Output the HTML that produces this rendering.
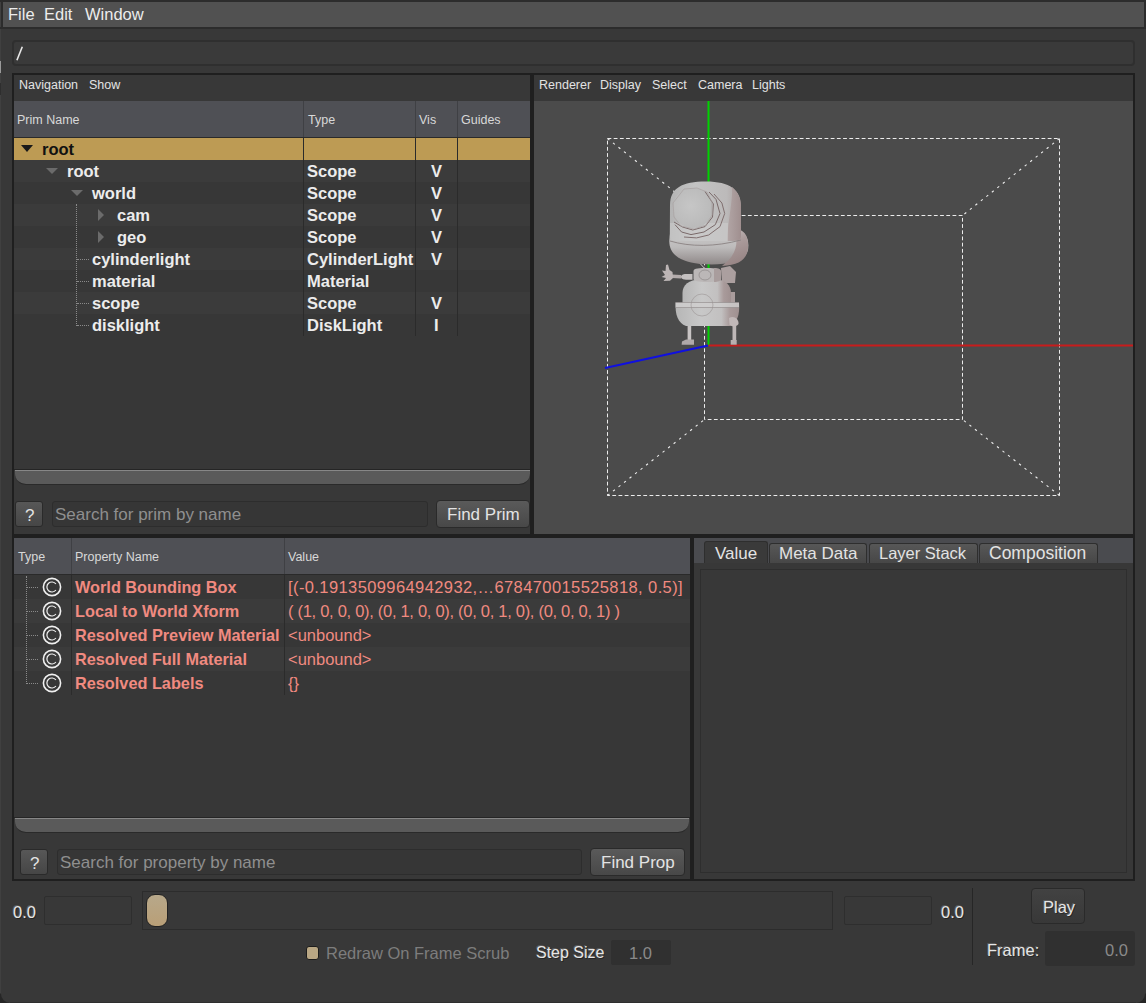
<!DOCTYPE html>
<html><head><meta charset="utf-8">
<style>
*{margin:0;padding:0;box-sizing:border-box}
html,body{width:1146px;height:1003px;overflow:hidden;background:#383838;font-family:"Liberation Sans",sans-serif;color:#e3e3e3}
.a{position:absolute}
.t{position:absolute;white-space:nowrap;line-height:1}
</style></head>
<body>
<div class="a" style="left:0px;top:0px;width:1146px;height:1003px;background:#383838"></div>
<div class="a" style="left:0px;top:0px;width:1px;height:1003px;background:#404040"></div>
<div class="a" style="left:0px;top:0px;width:1146px;height:2px;background:#2c2c2c"></div>
<div class="a" style="left:3px;top:2px;width:1141px;height:25px;background:#515151"></div>
<div class="a" style="left:0px;top:27px;width:1146px;height:2px;background:#2c2c2c"></div>
<div class="a" style="left:1144px;top:0px;width:2px;height:29px;background:#2c2c2c"></div>
<div class="a" style="left:1px;top:2px;width:2px;height:25px;background:#2c2c2c"></div>
<div class="t" style="left:8px;top:6px;font-size:16.5px;color:#ececec">File</div>
<div class="t" style="left:44px;top:6px;font-size:16.5px;color:#ececec">Edit</div>
<div class="t" style="left:85px;top:6px;font-size:16.5px;color:#ececec">Window</div>
<div class="a" style="left:12px;top:40px;width:1123px;height:26px;background:#3a3a3a;border:2px solid #2f2f2f;border-radius:4px"></div>
<svg class="a" style="left:0;top:0" width="40" height="80"><path d="M16.9 60.2L22.3 46.8" stroke="#e8e8e8" stroke-width="1.6"/></svg>
<div class="a" style="left:12px;top:73px;width:520px;height:463px;background:#383838;border:2px solid #1f1f1f"></div>
<div class="t" style="left:19px;top:79px;font-size:12.5px;">Navigation</div>
<div class="t" style="left:89px;top:79px;font-size:12.5px;">Show</div>
<div class="a" style="left:14px;top:101px;width:516px;height:368px;background:#373737"></div>
<div class="a" style="left:14px;top:101px;width:516px;height:36px;background:#4f5055"></div>
<div class="a" style="left:14px;top:137px;width:516px;height:1px;background:#2a2a2a"></div>
<div class="a" style="left:303px;top:101px;width:1px;height:36px;background:#3f4044"></div>
<div class="a" style="left:415px;top:101px;width:1px;height:36px;background:#3f4044"></div>
<div class="a" style="left:457px;top:101px;width:1px;height:36px;background:#3f4044"></div>
<div class="t" style="left:17px;top:114px;font-size:12.5px;color:#d8d8d8">Prim Name</div>
<div class="t" style="left:308px;top:114px;font-size:12.5px;color:#d8d8d8">Type</div>
<div class="t" style="left:419px;top:114px;font-size:12.5px;color:#d8d8d8">Vis</div>
<div class="t" style="left:461px;top:114px;font-size:12.5px;color:#d8d8d8">Guides</div>
<div class="a" style="left:14px;top:138px;width:516px;height:22px;background:#bd9b54"></div>
<svg class="a" style="left:21px;top:145px" width="12" height="7"><path d="M0 0H12L6 7Z" fill="#1a1a1a"/></svg>
<div class="t" style="left:42px;top:141px;font-size:16.5px;font-weight:bold;color:#111">root</div>
<div class="a" style="left:14px;top:160px;width:516px;height:22px;background:#3b3b3b"></div>
<svg class="a" style="left:46px;top:168px" width="12" height="6"><path d="M0 0H12L6 6Z" fill="#6b6b6b"/></svg>
<div class="t" style="left:67px;top:163px;font-size:16.5px;font-weight:bold;color:#ececec">root</div>
<div class="t" style="left:307px;top:163px;font-size:16.5px;font-weight:bold;color:#ececec">Scope</div>
<div class="t" style="left:431px;top:163px;font-size:16.5px;font-weight:bold;color:#ececec">V</div>
<div class="a" style="left:14px;top:182px;width:516px;height:22px;background:#373737"></div>
<svg class="a" style="left:71px;top:190px" width="12" height="6"><path d="M0 0H12L6 6Z" fill="#6b6b6b"/></svg>
<div class="t" style="left:92px;top:185px;font-size:16.5px;font-weight:bold;color:#ececec">world</div>
<div class="t" style="left:307px;top:185px;font-size:16.5px;font-weight:bold;color:#ececec">Scope</div>
<div class="t" style="left:431px;top:185px;font-size:16.5px;font-weight:bold;color:#ececec">V</div>
<div class="a" style="left:14px;top:204px;width:516px;height:22px;background:#3b3b3b"></div>
<svg class="a" style="left:98px;top:209px" width="6" height="12"><path d="M0 0V12L6 6Z" fill="#6b6b6b"/></svg>
<div class="t" style="left:117px;top:207px;font-size:16.5px;font-weight:bold;color:#ececec">cam</div>
<div class="t" style="left:307px;top:207px;font-size:16.5px;font-weight:bold;color:#ececec">Scope</div>
<div class="t" style="left:431px;top:207px;font-size:16.5px;font-weight:bold;color:#ececec">V</div>
<div class="a" style="left:14px;top:226px;width:516px;height:22px;background:#373737"></div>
<svg class="a" style="left:98px;top:231px" width="6" height="12"><path d="M0 0V12L6 6Z" fill="#6b6b6b"/></svg>
<div class="t" style="left:117px;top:229px;font-size:16.5px;font-weight:bold;color:#ececec">geo</div>
<div class="t" style="left:307px;top:229px;font-size:16.5px;font-weight:bold;color:#ececec">Scope</div>
<div class="t" style="left:431px;top:229px;font-size:16.5px;font-weight:bold;color:#ececec">V</div>
<div class="a" style="left:14px;top:248px;width:516px;height:22px;background:#3b3b3b"></div>
<div class="t" style="left:92px;top:251px;font-size:16.5px;font-weight:bold;color:#ececec">cylinderlight</div>
<div class="t" style="left:307px;top:251px;font-size:16.5px;font-weight:bold;color:#ececec">CylinderLight</div>
<div class="t" style="left:431px;top:251px;font-size:16.5px;font-weight:bold;color:#ececec">V</div>
<div class="a" style="left:14px;top:270px;width:516px;height:22px;background:#373737"></div>
<div class="t" style="left:92px;top:273px;font-size:16.5px;font-weight:bold;color:#ececec">material</div>
<div class="t" style="left:307px;top:273px;font-size:16.5px;font-weight:bold;color:#ececec">Material</div>
<div class="a" style="left:14px;top:292px;width:516px;height:22px;background:#3b3b3b"></div>
<div class="t" style="left:92px;top:295px;font-size:16.5px;font-weight:bold;color:#ececec">scope</div>
<div class="t" style="left:307px;top:295px;font-size:16.5px;font-weight:bold;color:#ececec">Scope</div>
<div class="t" style="left:431px;top:295px;font-size:16.5px;font-weight:bold;color:#ececec">V</div>
<div class="a" style="left:14px;top:314px;width:516px;height:22px;background:#373737"></div>
<div class="t" style="left:92px;top:317px;font-size:16.5px;font-weight:bold;color:#ececec">disklight</div>
<div class="t" style="left:307px;top:317px;font-size:16.5px;font-weight:bold;color:#ececec">DiskLight</div>
<div class="t" style="left:434px;top:317px;font-size:16.5px;font-weight:bold;color:#ececec">I</div>
<div class="a" style="left:303px;top:138px;width:1px;height:198px;background:#2b2b2b"></div>
<div class="a" style="left:415px;top:138px;width:1px;height:198px;background:#2b2b2b"></div>
<div class="a" style="left:457px;top:138px;width:1px;height:198px;background:#2b2b2b"></div>
<div class="a" style="left:76px;top:204px;width:1px;height:122px;border-left:1px dotted #8a8a8a"></div>
<div class="a" style="left:77px;top:259px;width:12px;height:1px;border-top:1px dotted #8a8a8a"></div>
<div class="a" style="left:77px;top:281px;width:12px;height:1px;border-top:1px dotted #8a8a8a"></div>
<div class="a" style="left:77px;top:303px;width:12px;height:1px;border-top:1px dotted #8a8a8a"></div>
<div class="a" style="left:77px;top:325px;width:12px;height:1px;border-top:1px dotted #8a8a8a"></div>
<div class="a" style="left:14px;top:469px;width:516px;height:1px;background:#252525"></div>
<div class="a" style="left:15px;top:470px;width:515px;height:15px;background:#5a5a5a;border-top:1px solid #878787;border-bottom:1px solid #2a2a2a;border-radius:0 0 11px 11px"></div>
<div class="a" style="left:15px;top:501px;width:28px;height:26px;border-radius:3px;background:linear-gradient(#575757,#464646);border:1px solid #2a2a2a"></div>
<div class="t" style="left:25px;top:507px;font-size:17px;">?</div>
<div class="a" style="left:52px;top:501px;width:376px;height:26px;background:#363636;border:1px solid #2d2d2d;border-radius:3px"></div>
<div class="t" style="left:55px;top:506px;font-size:17px;color:#8f8f8f">Search for prim by name</div>
<div class="a" style="left:436px;top:500px;width:94px;height:28px;border-radius:4px;background:linear-gradient(#5a5a5a,#484848);border:1px solid #2a2a2a"></div>
<div class="t" style="left:447px;top:506px;font-size:17px;">Find Prim</div>
<div class="a" style="left:532px;top:73px;width:603px;height:463px;background:#383838;border:2px solid #1f1f1f"></div>
<div class="t" style="left:539px;top:79px;font-size:12.5px;">Renderer</div>
<div class="t" style="left:600px;top:79px;font-size:12.5px;">Display</div>
<div class="t" style="left:652px;top:79px;font-size:12.5px;">Select</div>
<div class="t" style="left:698px;top:79px;font-size:12.5px;">Camera</div>
<div class="t" style="left:752px;top:79px;font-size:12.5px;">Lights</div>
<div class="a" style="left:534px;top:101px;width:599px;height:433px;background:#4b4b4b"></div>
<svg class="a" style="left:534px;top:101px" width="599" height="433" viewBox="534 101 599 433"><defs><linearGradient id="gh" x1="0" y1="0" x2="1" y2="0"><stop offset="0" stop-color="#b4b4b4"/><stop offset="0.35" stop-color="#c3c3c3"/><stop offset="0.8" stop-color="#bcbaba"/><stop offset="1" stop-color="#a89c9c"/></linearGradient><linearGradient id="gb" x1="0" y1="0" x2="1" y2="0"><stop offset="0" stop-color="#b6b6b6"/><stop offset="0.4" stop-color="#c8c8c8"/><stop offset="0.72" stop-color="#c2c0c0"/><stop offset="0.85" stop-color="#a99b9b"/><stop offset="1" stop-color="#9f9090"/></linearGradient><linearGradient id="gc" x1="0" y1="0" x2="0" y2="1"><stop offset="0" stop-color="#cbcaca"/><stop offset="0.5" stop-color="#bdbbbb"/><stop offset="1" stop-color="#8f8888"/></linearGradient><radialGradient id="gv" cx="0.45" cy="0.45" r="0.6"><stop offset="0" stop-color="#c6c6c6"/><stop offset="1" stop-color="#b9b9b9"/></radialGradient><linearGradient id="gr" x1="0" y1="0" x2="0.3" y2="1"><stop offset="0" stop-color="#c6c2c2"/><stop offset="0.45" stop-color="#ab9c9c"/><stop offset="1" stop-color="#988686"/></linearGradient><linearGradient id="gs" x1="0" y1="0" x2="1" y2="0"><stop offset="0" stop-color="#b2a6a6"/><stop offset="1" stop-color="#a08f8f"/></linearGradient></defs><g fill="none" stroke="#ececec" stroke-width="1"><path d="M607.5 138.5H1059.5V495.5H607.5Z" stroke-dasharray="3.8 2.4"/><path d="M704.5 215.5H962.5V419.5H704.5Z" stroke-dasharray="3.8 2.4"/><path d="M607.5 138.5L704.5 215.5M1059.5 138.5L962.5 215.5M1059.5 495.5L962.5 419.5M607.5 495.5L704.5 419.5" stroke-dasharray="2.4 4.6" stroke-width="1.1"/></g><path d="M708.5 101V345.5" stroke="#00d200" stroke-width="2"/><path d="M708.5 345.5H1134" stroke="#c81c1c" stroke-width="1.8"/><path d="M708 345.5L605 368" stroke="#1010e0" stroke-width="1.8"/><path d="M687.6 326H691.2V340.6H687.6Z" fill="#c8c4c4"/><path d="M682 341.5L686 339.6H694V344.7H681.6Z" fill="#b0a9a9"/><path d="M732.5 326H736.2V340.6H732.5Z" fill="#bdb6b6"/><path d="M730.7 340H736.7V344.7H730.7Z" fill="#b8b0b0"/><path d="M721 268L730 266L736 272L735 283L722 283Z" fill="#ab9f9f"/><path d="M728 292H735V304H728Z" fill="#a99c9c"/><path d="M696 259L706 270" stroke="#c8c4c4" stroke-width="1"/><path d="M672 274.5L681 275L681 278.5L672 278Z" fill="#b3abab"/><path d="M681 276.8C681 274.5 684 274 687 274H692.5V279.8H687C684 279.8 681 279 681 276.8Z" fill="#c4c0c0"/><path d="M666 265L668 264.5L669.5 270L672.5 272L673 278L670 280.7L663.5 281L666 278L661.5 277L665 275L662 270.5L665.5 271Z" fill="#bcb5b5"/><path d="M682.5 303V293C682.5 285 689 279.5 700 279.5H716C725 279.5 731 285 731 293V303Z" fill="url(#gb)"/><path d="M675.6 302.5H739C740 315 737 323 730 326H686C678 323 675 315 675.6 302.5Z" fill="url(#gb)"/><path d="M675.6 302.5H739V307.5H675.6Z" fill="#cfcece" opacity="0.8"/><path d="M675.6 302.5H739M675.6 307.5H739" stroke="#8d8787" stroke-width="0.6"/><circle cx="702" cy="305" r="11" fill="none" stroke="#9a9494" stroke-width="0.6"/><path d="M729 318C734 315 739 319 738.5 324C737 327 732 327 729.5 325Z" fill="#c1b8b8"/><path d="M693.5 271C693.5 268 700 268 707 268C716 268 721 269 721 272V279C721 281 715 282 707 282C699 282 693.5 281 693.5 279Z" fill="#bbb7b7"/><path d="M714 268C719 268 721 269 721 272V279C721 281 718 282 714 282Z" fill="#a99d9d"/><ellipse cx="705" cy="275" rx="6" ry="5" fill="none" stroke="#8c8686" stroke-width="0.7"/><path d="M669.5 238C668 252 676 261 700 264C725 266 745 262 748 250C749.5 240 746 232 738 230L670 234Z" fill="url(#gc)"/><path d="M735 229C744 229 749 236 748 248C747 259 740 265 722 266C735 256 739 246 735 229Z" fill="url(#gr)"/><path d="M670 205C670 188 682 181.5 706 181.5C730 181.5 741 190 741 206V236C741 240 737 241 730 241H675C671 241 669.8 239 669.8 236Z" fill="url(#gh)"/><path d="M732 187C738 192 741 199 741 208V236C741 240 739 241 727 241C728 220 733 200 732 187Z" fill="url(#gs)"/><path d="M670 223H728V241H675C671 241 670 239 670 236Z" fill="#d0cfcf" opacity="0.5"/><circle cx="692.8" cy="208" r="20" fill="url(#gv)"/><path d="M705 191.5L713.4 204L712.5 217L705 226.6L692.8 230L682.5 227L674 222" fill="none" stroke="#7a6a6a" stroke-width="1"/><path d="M709 192L716 199.4L720 213.5L715.3 224.7L704 232L691 234.6L681.6 232L675 224.7" fill="none" stroke="#7a6a6a" stroke-width="1"/><path d="M714 194L721.9 203L724.7 213.5L720 226.6L708.7 235L696.5 237.9L684 237" fill="none" stroke="#806f6f" stroke-width="1"/><path d="M684 189L697 188L707 192L712 202L712 215L706 225L694 229L681 226L674 217L673 203Z" fill="none" stroke="#a8a0a0" stroke-width="0.7"/><path d="M670 241C690 247 715 247 741 240" fill="none" stroke="#8a8282" stroke-width="0.9"/></svg>
<div class="a" style="left:12px;top:536px;width:680px;height:345px;background:#383838;border:2px solid #1f1f1f"></div>
<div class="a" style="left:14px;top:538px;width:676px;height:36px;background:#4f5055"></div>
<div class="a" style="left:14px;top:574px;width:676px;height:1px;background:#2a2a2a"></div>
<div class="a" style="left:71px;top:538px;width:1px;height:36px;background:#3f4044"></div>
<div class="a" style="left:284px;top:538px;width:1px;height:36px;background:#3f4044"></div>
<div class="t" style="left:18px;top:551px;font-size:12.5px;color:#d8d8d8">Type</div>
<div class="t" style="left:75px;top:551px;font-size:12.5px;color:#d8d8d8">Property Name</div>
<div class="t" style="left:288px;top:551px;font-size:12.5px;color:#d8d8d8">Value</div>
<div class="a" style="left:14px;top:575px;width:676px;height:242px;background:#373737"></div>
<div class="a" style="left:14px;top:575px;width:676px;height:24px;background:#373737"></div>
<svg class="a" style="left:42px;top:577px" width="20" height="20"><circle cx="10" cy="10" r="8.6" fill="none" stroke="#f0f0f0" stroke-width="1.6"/><path d="M13.9 7A5 5 0 1 0 13.9 13" fill="none" stroke="#f0f0f0" stroke-width="1.2"/></svg>
<div class="t" style="left:75px;top:579px;font-size:16.3px;font-weight:bold;color:#f08a80">World Bounding Box</div>
<div class="t" style="left:288px;top:579px;font-size:16.5px;color:#f08a80;letter-spacing:0.4px">[(-0.1913509964942932,…678470015525818, 0.5)]</div>
<div class="a" style="left:26px;top:587px;width:12px;height:1px;border-top:1px dotted #8a8a8a"></div>
<div class="a" style="left:14px;top:599px;width:676px;height:24px;background:#3b3b3b"></div>
<svg class="a" style="left:42px;top:601px" width="20" height="20"><circle cx="10" cy="10" r="8.6" fill="none" stroke="#f0f0f0" stroke-width="1.6"/><path d="M13.9 7A5 5 0 1 0 13.9 13" fill="none" stroke="#f0f0f0" stroke-width="1.2"/></svg>
<div class="t" style="left:75px;top:603px;font-size:16.3px;font-weight:bold;color:#f08a80">Local to World Xform</div>
<div class="t" style="left:288px;top:603px;font-size:16.5px;color:#f08a80;letter-spacing:-0.29px">( (1, 0, 0, 0), (0, 1, 0, 0), (0, 0, 1, 0), (0, 0, 0, 1) )</div>
<div class="a" style="left:26px;top:611px;width:12px;height:1px;border-top:1px dotted #8a8a8a"></div>
<div class="a" style="left:14px;top:623px;width:676px;height:24px;background:#373737"></div>
<svg class="a" style="left:42px;top:625px" width="20" height="20"><circle cx="10" cy="10" r="8.6" fill="none" stroke="#f0f0f0" stroke-width="1.6"/><path d="M13.9 7A5 5 0 1 0 13.9 13" fill="none" stroke="#f0f0f0" stroke-width="1.2"/></svg>
<div class="t" style="left:75px;top:627px;font-size:16.3px;font-weight:bold;color:#f08a80">Resolved Preview Material</div>
<div class="t" style="left:288px;top:627px;font-size:16.5px;color:#f08a80;">&lt;unbound&gt;</div>
<div class="a" style="left:26px;top:635px;width:12px;height:1px;border-top:1px dotted #8a8a8a"></div>
<div class="a" style="left:14px;top:647px;width:676px;height:24px;background:#3b3b3b"></div>
<svg class="a" style="left:42px;top:649px" width="20" height="20"><circle cx="10" cy="10" r="8.6" fill="none" stroke="#f0f0f0" stroke-width="1.6"/><path d="M13.9 7A5 5 0 1 0 13.9 13" fill="none" stroke="#f0f0f0" stroke-width="1.2"/></svg>
<div class="t" style="left:75px;top:651px;font-size:16.3px;font-weight:bold;color:#f08a80">Resolved Full Material</div>
<div class="t" style="left:288px;top:651px;font-size:16.5px;color:#f08a80;">&lt;unbound&gt;</div>
<div class="a" style="left:26px;top:659px;width:12px;height:1px;border-top:1px dotted #8a8a8a"></div>
<div class="a" style="left:14px;top:671px;width:676px;height:24px;background:#373737"></div>
<svg class="a" style="left:42px;top:673px" width="20" height="20"><circle cx="10" cy="10" r="8.6" fill="none" stroke="#f0f0f0" stroke-width="1.6"/><path d="M13.9 7A5 5 0 1 0 13.9 13" fill="none" stroke="#f0f0f0" stroke-width="1.2"/></svg>
<div class="t" style="left:75px;top:675px;font-size:16.3px;font-weight:bold;color:#f08a80">Resolved Labels</div>
<div class="t" style="left:288px;top:675px;font-size:16.5px;color:#f08a80;">{}</div>
<div class="a" style="left:26px;top:683px;width:12px;height:1px;border-top:1px dotted #8a8a8a"></div>
<div class="a" style="left:26px;top:576px;width:1px;height:108px;border-left:1px dotted #8a8a8a"></div>
<div class="a" style="left:71px;top:575px;width:1px;height:120px;background:#2b2b2b"></div>
<div class="a" style="left:284px;top:575px;width:1px;height:120px;background:#2b2b2b"></div>
<div class="a" style="left:14px;top:817px;width:676px;height:1px;background:#252525"></div>
<div class="a" style="left:15px;top:818px;width:674px;height:15px;background:#5a5a5a;border-top:1px solid #878787;border-bottom:1px solid #2a2a2a;border-radius:0 0 11px 11px"></div>
<div class="a" style="left:20px;top:849px;width:28px;height:26px;border-radius:3px;background:linear-gradient(#575757,#464646);border:1px solid #2a2a2a"></div>
<div class="t" style="left:30px;top:855px;font-size:17px;">?</div>
<div class="a" style="left:57px;top:849px;width:525px;height:26px;background:#363636;border:1px solid #2d2d2d;border-radius:3px"></div>
<div class="t" style="left:60px;top:854px;font-size:17px;color:#8f8f8f">Search for property by name</div>
<div class="a" style="left:590px;top:848px;width:95px;height:28px;border-radius:4px;background:linear-gradient(#5a5a5a,#484848);border:1px solid #2a2a2a"></div>
<div class="t" style="left:601px;top:854px;font-size:17px;">Find Prop</div>
<div class="a" style="left:692px;top:536px;width:443px;height:345px;background:#383838;border:2px solid #1f1f1f"></div>
<div class="a" style="left:694px;top:538px;width:439px;height:25px;background:#4a4b4f"></div>
<div class="a" style="left:704px;top:541px;width:64px;height:23px;background:#3a3a3a;border:1px solid #2e2e2e;border-bottom:none;border-radius:3px 3px 0 0"></div>
<div class="a" style="left:769px;top:543px;width:98px;height:20px;background:linear-gradient(#575757,#474747);border:1px solid #2e2e2e;border-bottom:none;border-radius:3px 3px 0 0"></div>
<div class="t" style="left:779px;top:545px;font-size:17px;">Meta Data</div>
<div class="a" style="left:869px;top:543px;width:109px;height:20px;background:linear-gradient(#575757,#474747);border:1px solid #2e2e2e;border-bottom:none;border-radius:3px 3px 0 0"></div>
<div class="t" style="left:879px;top:545px;font-size:16.5px;">Layer Stack</div>
<div class="a" style="left:979px;top:543px;width:119px;height:20px;background:linear-gradient(#575757,#474747);border:1px solid #2e2e2e;border-bottom:none;border-radius:3px 3px 0 0"></div>
<div class="t" style="left:989px;top:545px;font-size:17.5px;">Composition</div>
<div class="t" style="left:715px;top:545px;font-size:17px;">Value</div>
<div class="a" style="left:694px;top:563px;width:439px;height:316px;background:#383838"></div>
<div class="a" style="left:700px;top:569px;width:427px;height:304px;background:#383838;border:1px solid #2e2e2e"></div>
<div class="t" style="left:13px;top:904px;font-size:16.5px;color:#e6e6e6;text-shadow:-1px -1px 0 rgba(120,120,120,0.55),1px 1px 0 rgba(0,0,0,0.35)">0.0</div>
<div class="a" style="left:44px;top:896px;width:88px;height:29px;background:#383838;border:1px solid #2e2e2e;border-radius:2px"></div>
<div class="a" style="left:142px;top:891px;width:691px;height:39px;background:#383838;border:1px solid #2c2c2c"></div>
<div class="a" style="left:146px;top:894px;width:22px;height:33px;background:linear-gradient(#b7a88a,#b99f77);border:1px solid #222;border-radius:9px"></div>
<div class="a" style="left:844px;top:896px;width:88px;height:29px;background:#383838;border:1px solid #2e2e2e;border-radius:2px"></div>
<div class="t" style="left:941px;top:904px;font-size:16.5px;color:#e6e6e6;text-shadow:-1px -1px 0 rgba(120,120,120,0.55),1px 1px 0 rgba(0,0,0,0.35)">0.0</div>
<div class="a" style="left:972px;top:888px;width:1px;height:77px;background:#262626"></div>
<div class="a" style="left:1031px;top:888px;width:54px;height:36px;background:linear-gradient(#424242,#383838);border:1px solid #2a2a2a;border-radius:4px"></div>
<div class="t" style="left:1043px;top:899px;font-size:16.5px;color:#e6e6e6;text-shadow:-1px -1px 0 rgba(120,120,120,0.55),1px 1px 0 rgba(0,0,0,0.35)">Play</div>
<div class="t" style="left:987px;top:942px;font-size:16.5px;color:#e6e6e6;text-shadow:-1px -1px 0 rgba(120,120,120,0.55),1px 1px 0 rgba(0,0,0,0.35)">Frame:</div>
<div class="a" style="left:1045px;top:931px;width:90px;height:35px;background:#303030;border-radius:3px"></div>
<div class="t" style="left:1105px;top:942px;font-size:16.5px;color:#8a8a8a">0.0</div>
<div class="a" style="left:306px;top:946px;width:13px;height:14px;background:#b9a784;border:1px solid #1c1c1c;border-radius:3px"></div>
<div class="t" style="left:326px;top:945px;font-size:16.5px;color:#7d7d7d">Redraw On Frame Scrub</div>
<div class="t" style="left:536px;top:945px;font-size:16px;color:#e6e6e6;text-shadow:-1px -1px 0 rgba(120,120,120,0.55),1px 1px 0 rgba(0,0,0,0.35)">Step Size</div>
<div class="a" style="left:611px;top:940px;width:60px;height:25px;background:#303030;border-radius:2px"></div>
<div class="t" style="left:629px;top:945px;font-size:16.5px;color:#8a8a8a">1.0</div>
<div class="a" style="left:0px;top:61px;width:1px;height:12px;background:#9a9a9a"></div>
<div class="a" style="left:0px;top:83px;width:1px;height:12px;background:#2e2e2e"></div>
<svg class="a" style="left:0;top:993px" width="1146" height="10"><path d="M0 0V10H10A9 9 0 0 1 1 1Z" fill="#262626"/><path d="M1146 0V10H1136A9 9 0 0 0 1145 1Z" fill="#262626"/><path d="M10 9.5H1136" stroke="#2e2e2e" stroke-width="1"/></svg>
</body></html>
